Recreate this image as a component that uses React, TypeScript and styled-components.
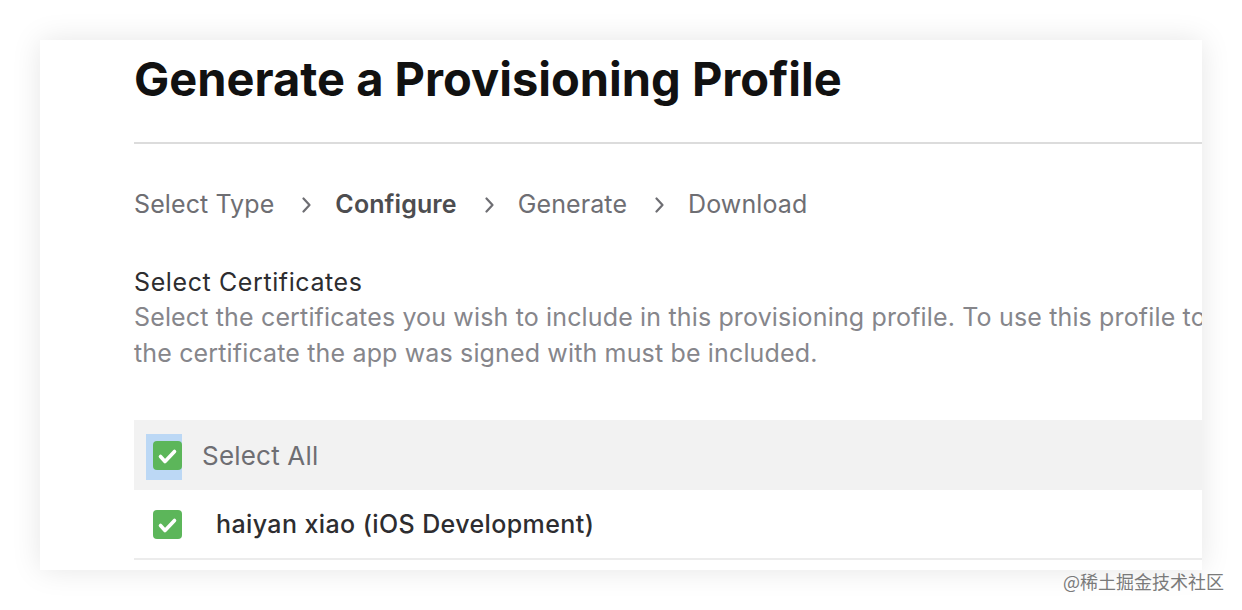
import React, { useState } from "react";
import styled, { createGlobalStyle } from "styled-components";

const Global = createGlobalStyle`
  html, body { margin: 0; padding: 0; background: #ffffff; }
  body { font-family: Inter, "Noto Sans", "Liberation Sans", sans-serif; -webkit-font-smoothing: antialiased; }
`;

const Page = styled.div`
  position: relative;
  width: 1242px;
  height: 610px;
  padding: 40px 40px 0 40px;
  box-sizing: border-box;
  overflow: hidden;
`;

const Card = styled.div`
  width: 1162px;
  height: 530px;
  background: #fff;
  box-shadow: 0 0 28px rgba(0, 0, 0, 0.1);
  overflow: hidden;
  padding-left: 94px;
  box-sizing: border-box;
`;

const Inner = styled.div`
  width: 1200px;
`;

const Title = styled.h1`
  margin: 0;
  padding-top: 12px;
  height: 90px;
  font-size: 47px;
  font-weight: 700;
  color: #111;
  line-height: 54px;
  border-bottom: 2px solid #dcdcdc;
`;

const Steps = styled.div`
  display: flex;
  align-items: center;
  margin-top: 42px;
  font-size: 25px;
  letter-spacing: 0.1px;
  height: 36px;
`;

const Step = styled.span<{ $active?: boolean }>`
  font-weight: ${(p) => (p.$active ? 600 : 400)};
  color: ${(p) => (p.$active ? "#4d4d50" : "#6e6e73")};
`;

const Chevron = styled.svg`
  width: 9px;
  height: 16px;
  margin: 2px 24px 0 28px;
`;

const Section = styled.div`
  margin-top: 44px;
`;

const SectionTitle = styled.div`
  font-size: 25px;
  font-weight: 400;
  letter-spacing: 0.6px;
  color: #2d2d30;
  line-height: 33px;
`;

const Description = styled.p`
  margin: 0;
  font-size: 25px;
  letter-spacing: 0.15px;
  line-height: 36px;
  white-space: nowrap;
  color: #86868b;
`;

const List = styled.div`
  margin-top: 49px;
`;

const Row = styled.label<{ $head?: boolean }>`
  display: flex;
  align-items: center;
  height: ${(p) => (p.$head ? 70 : 68)}px;
  background: ${(p) => (p.$head ? "#f2f2f2" : "#fff")};
  border-bottom: ${(p) => (p.$head ? "none" : "2px solid #ececec")};
  padding-left: 19px;
  cursor: pointer;
`;

const Focus = styled.span<{ $focus?: boolean }>`
  display: flex;
  padding: 7px 0 10px 7px;
  margin: 3px 0 0 -7px;
  background: ${(p) => (p.$focus ? "#bcd8f5" : "transparent")};
`;

const Box = styled.span`
  width: 29px;
  height: 29px;
  border-radius: 4px;
  background: #5cb65a;
  display: flex;
`;

const RowText = styled.span<{ $head?: boolean }>`
  margin-left: ${(p) => (p.$head ? 20 : 34)}px;
  font-size: ${(p) => (p.$head ? 26 : 25)}px;
  letter-spacing: ${(p) => (p.$head ? 0.2 : 0.4)}px;
  color: ${(p) => (p.$head ? "#6e6e73" : "#2d2d30")};
  font-weight: ${(p) => (p.$head ? 400 : 500)};
`;

const Watermark = styled.div`
  position: absolute;
  right: 18px;
  bottom: 16px;
  font-size: 18px;
  color: #7a7a7a;
  font-family: "Noto Sans CJK SC", sans-serif;
`;

function Check() {
  return (
    <Box>
      <svg width="29" height="29" viewBox="0 0 29 29">
        <path d="M7.5 15.5 L12 20.5 L21.5 10.5" fill="none" stroke="#fff" strokeWidth="3.6" strokeLinecap="round" strokeLinejoin="round" />
      </svg>
    </Box>
  );
}

function Arrow() {
  return (
    <Chevron viewBox="0 0 9 16">
      <path d="M1.5 1.5 L7.5 8 L1.5 14.5" fill="none" stroke="#6e6e73" strokeWidth="2.2" strokeLinecap="round" strokeLinejoin="round" />
    </Chevron>
  );
}

export default function App() {
  const [all, setAll] = useState(true);
  return (
    <Page>
      <Global />
      <Card>
        <Inner>
          <Title>Generate a Provisioning Profile</Title>
          <Steps>
            <Step>Select Type</Step>
            <Arrow />
            <Step $active>Configure</Step>
            <Arrow />
            <Step>Generate</Step>
            <Arrow />
            <Step>Download</Step>
          </Steps>
          <Section>
            <SectionTitle>Select Certificates</SectionTitle>
            <Description>
              Select the certificates you wish to include in this provisioning profile. To use this profile to install an app,
              <br />
              the certificate the app was signed with must be included.
            </Description>
          </Section>
          <List>
            <Row $head onClick={() => setAll(!all)}>
              <Focus $focus={all}>
                <Check />
              </Focus>
              <RowText $head>Select All</RowText>
            </Row>
            <Row>
              <Check />
              <RowText>haiyan xiao (iOS Development)</RowText>
            </Row>
          </List>
        </Inner>
      </Card>
      <Watermark>@稀土掘金技术社区</Watermark>
    </Page>
  );
}
